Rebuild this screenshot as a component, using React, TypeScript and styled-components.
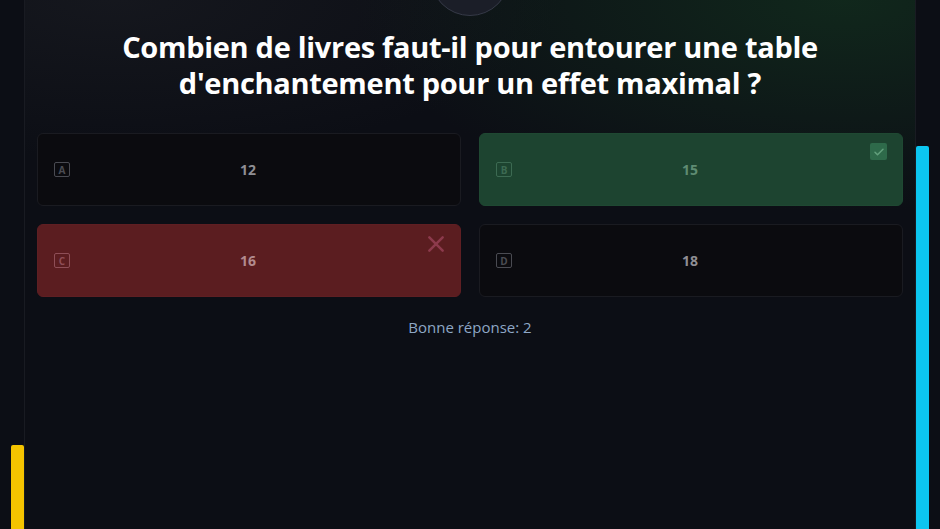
import styled, { createGlobalStyle } from 'styled-components';

const GlobalStyle = createGlobalStyle`
  html, body {
    margin: 0;
    padding: 0;
    background: #0c0e15;
    overflow: hidden;
  }
  * {
    box-sizing: border-box;
  }
`;

const Screen = styled.div`
  display: flex;
  height: 529px;
  padding: 0 11px;
  font-family: 'Open Sans', 'Noto Sans', sans-serif;
`;

const BarTrack = styled.div`
  width: 13px;
  display: flex;
  flex-direction: column;
  justify-content: flex-end;
`;

const BarFill = styled.div<{ $color: string }>`
  width: 100%;
  background: ${(p) => p.$color};
  border-radius: 2px 2px 0 0;
`;

const Panel = styled.main`
  position: relative;
  flex: 1;
  border-left: 1px solid #191b22;
  border-right: 1px solid #191b22;
  background:
    radial-gradient(ellipse 55% 40% at 92% 0%, rgba(22, 70, 36, 0.45), transparent 100%),
    radial-gradient(ellipse 50% 30% at 10% 0%, rgba(30, 32, 38, 0.5), transparent 100%),
    #0c0e15;
  padding: 29px 12px 0;
  display: flex;
  flex-direction: column;
`;

const Avatar = styled.div`
  position: absolute;
  top: -64px;
  left: 50%;
  transform: translateX(-50%);
  width: 80px;
  height: 80px;
  border-radius: 50%;
  background: #1b1e28;
  border: 1px solid #353947;
`;

const Question = styled.h1`
  margin: 0 0 32px;
  text-align: center;
  color: #ffffff;
  font-size: 29px;
  line-height: 36px;
  font-weight: 700;
  letter-spacing: -0.3px;
`;

const Answers = styled.div`
  display: grid;
  grid-template-columns: 1fr 1fr;
  gap: 18px;
`;

type Status = 'idle' | 'correct' | 'wrong';

const cardTheme = {
  idle: { bg: '#0b0b0f', border: '#1a1b21', text: '#8f8f94', key: '#4a4b52' },
  correct: { bg: '#1d4430', border: '#1f4832', text: '#5f8c73', key: '#3c6a52' },
  wrong: { bg: '#5b1d20', border: '#5f1f23', text: '#b28b8e', key: '#8e4e56' },
};

const Card = styled.button<{ $status: Status }>`
  position: relative;
  display: flex;
  align-items: center;
  height: 73px;
  padding: 0 16px;
  border-radius: 6px;
  border: 1px solid ${(p) => cardTheme[p.$status].border};
  background: ${(p) => cardTheme[p.$status].bg};
  font-family: inherit;
  cursor: default;
`;

const KeyBadge = styled.span<{ $status: Status }>`
  display: flex;
  align-items: center;
  justify-content: center;
  width: 16px;
  height: 15px;
  border: 1px solid ${(p) => cardTheme[p.$status].key};
  border-radius: 2px;
  color: ${(p) => cardTheme[p.$status].key};
  font-size: 10px;
  font-weight: 700;
  line-height: 1;
`;

const Value = styled.span<{ $status: Status }>`
  flex: 1;
  margin-right: 18px;
  text-align: center;
  color: ${(p) => cardTheme[p.$status].text};
  font-size: 14px;
  font-weight: 700;
`;

const CornerMark = styled.span<{ $right: number }>`
  position: absolute;
  top: 9px;
  right: ${(p) => p.$right}px;
  display: flex;
`;

const CheckBox = styled.span`
  display: flex;
  align-items: center;
  justify-content: center;
  width: 17px;
  height: 17px;
  border-radius: 2px;
  background: #2e6a4a;
`;

const Hint = styled.p`
  margin: 20px 0 0;
  text-align: center;
  color: #8ea7c6;
  font-size: 15px;
`;

const answers: { key: string; value: string; status: Status }[] = [
  { key: 'A', value: '12', status: 'idle' },
  { key: 'B', value: '15', status: 'correct' },
  { key: 'C', value: '16', status: 'wrong' },
  { key: 'D', value: '18', status: 'idle' },
];

const App = () => {
  return (
    <>
      <GlobalStyle />
      <Screen>
        <BarTrack>
          <BarFill $color='#f5c400' style={{ height: `${(84 / 529) * 100}%` }} />
        </BarTrack>
        <Panel>
          <Avatar />
          <Question>
            Combien de livres faut-il pour entourer une table
            <br />
            d'enchantement pour un effet maximal ?
          </Question>
          <Answers>
            {answers.map((a) => (
              <Card key={a.key} $status={a.status}>
                <KeyBadge $status={a.status}>{a.key}</KeyBadge>
                <Value $status={a.status}>{a.value}</Value>
                {a.status === 'correct' && (
                  <CornerMark $right={15}>
                    <CheckBox>
                      <svg width='12' height='12' viewBox='0 0 24 24' fill='none' stroke='#62a07c' strokeWidth='3' strokeLinecap='round' strokeLinejoin='round'>
                        <path d='M4 12.5l5 5L20 6.5' />
                      </svg>
                    </CheckBox>
                  </CornerMark>
                )}
                {a.status === 'wrong' && (
                  <CornerMark $right={14}>
                    <svg width='20' height='20' viewBox='0 0 24 24' fill='none' stroke='#8c3a4c' strokeWidth='3' strokeLinecap='round'>
                      <path d='M4 4l16 16M20 4L4 20' />
                    </svg>
                  </CornerMark>
                )}
              </Card>
            ))}
          </Answers>
          <Hint>Bonne réponse: 2</Hint>
        </Panel>
        <BarTrack>
          <BarFill $color='#0cc6f0' style={{ height: `${(383 / 529) * 100}%` }} />
        </BarTrack>
      </Screen>
    </>
  );
};

export default App;
